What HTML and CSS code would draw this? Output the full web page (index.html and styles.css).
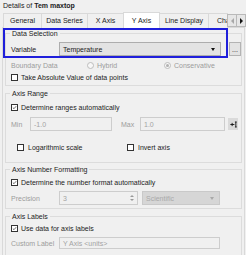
FILE: index.html
```html
<!DOCTYPE html>
<html>
<head>
<meta charset="utf-8">
<link rel="stylesheet" href="styles.css">
</head>
<body>
<div class="title">Details of <b>Tem maxtop</b></div>
<div class="tabs">
  <div class="tab w-general">General</div>
  <div class="tab w-series">Data Series</div>
  <div class="tab w-xaxis">X Axis</div>
  <div class="tab sel w-yaxis">Y Axis</div>
  <div class="tab w-line">Line Display</div>
  <div class="tab w-chart">Chart</div>
  <div class="scrollbtn left"><span class="tri-l"></span></div>
  <div class="scrollbtn right"><span class="tri-r"></span></div>
</div>
<div class="pane">
  <div class="group g1">
    <div class="gtitle">Data Selection</div>
    <div class="row r-var">
      <span class="lbl w48">Variable</span>
      <div class="combo w-var">Temperature<span class="arrow"></span></div>
      <div class="btn dots">...</div>
    </div>
    <div class="row r-bound dis">
      <span class="lbl w76">Boundary Data</span>
      <span class="opt w77"><span class="radio"></span>Hybrid</span>
      <span class="opt"><span class="radio on"></span>Conservative</span>
    </div>
    <div class="row r-chk">
      <span class="cb"></span><span class="cbt">Take Absolute Value of data points</span>
    </div>
  </div>

  <div class="group g2">
    <div class="gtitle">Axis Range</div>
    <div class="row r-chk m4">
      <span class="cb on"><svg viewBox="0 0 7 7"><polyline points="1.2,3.6 2.8,5.2 5.9,1.6" fill="none" stroke="#222" stroke-width="0.9"/></svg></span><span class="cbt">Determine ranges automatically</span>
    </div>
    <div class="row r-minmax dis">
      <span class="lbl w19">Min</span>
      <div class="field w-min">-1.0</div>
      <span class="lbl w19 ml9">Max</span>
      <div class="field w-max">1.0</div>
      <div class="iconbtn"><svg viewBox="0 0 10 10"><path d="M1.5 5h4.5M3.5 3.2v3.6M7.6 2.2v5.6M6.6 2.2h2M6.6 7.8h2" fill="none" stroke="#111" stroke-width="1"/></svg></div>
    </div>
    <div class="row r-log">
      <span class="opt w110"><span class="cb"></span><span class="cbt4">Logarithmic scale</span></span>
      <span class="opt"><span class="cb"></span><span class="cbt4">Invert axis</span></span>
    </div>
  </div>

  <div class="group g3">
    <div class="gtitle">Axis Number Formatting</div>
    <div class="row r-chk m3">
      <span class="cb on"><svg viewBox="0 0 7 7"><polyline points="1.2,3.6 2.8,5.2 5.9,1.6" fill="none" stroke="#222" stroke-width="0.9"/></svg></span><span class="cbt">Determine the number format automatically</span>
    </div>
    <div class="row r-prec dis">
      <span class="lbl w48">Precision</span>
      <div class="field w-spin">3<span class="spin"><span class="up"></span><span class="down"></span></span></div>
      <div class="combo discombo w-sci">Scientific<span class="arrow"></span></div>
    </div>
  </div>

  <div class="group g4">
    <div class="gtitle">Axis Labels</div>
    <div class="row r-chk m2">
      <span class="cb on"><svg viewBox="0 0 7 7"><polyline points="1.2,3.6 2.8,5.2 5.9,1.6" fill="none" stroke="#222" stroke-width="0.9"/></svg></span><span class="cbt">Use data for axis labels</span>
    </div>
    <div class="row r-custom dis">
      <span class="lbl w48">Custom Label</span>
      <div class="field w-custom">Y Axis &lt;units&gt;</div>
    </div>
  </div>
</div>
<div class="highlight"></div>
</body>
</html>
```

FILE: styles.css
```css
* { box-sizing: border-box; }
html, body { margin: 0; padding: 0; }
body {
  background: #f0f0f0;
  font-family: "Liberation Sans", Arial, sans-serif;
  font-size: 7px;
  color: #1c1c1c;
  width: 246px;
  height: 255px;
  overflow: hidden;
  position: relative;
}
.title { height: 12px; line-height: 12px; padding-left: 3px; white-space: nowrap; }
.title b { font-weight: bold; }

.tabs { display: flex; height: 16px; padding-left: 3px; align-items: flex-end; }
.tab {
  flex: none;
  height: 15px;
  line-height: 14px;
  text-align: center;
  border: 1px solid #d9d9d9;
  border-bottom: none;
  background: #f0f0f0;
  margin-right: -1px;
  white-space: nowrap;
  overflow: hidden;
}
.tab.sel { height: 16px; line-height: 15px; background: #fff; position: relative; z-index: 1; }
.w-general { width: 39px; }
.w-series { width: 47px; }
.w-xaxis { width: 37px; }
.w-yaxis { width: 37px; }
.w-line { width: 50px; }
.w-chart { width: 20px; text-align: left; padding-left: 8px; }
.scrollbtn {
  flex: none;
  width: 10px; height: 13px;
  margin-bottom: 1px;
  border: 1px solid #b9b9b9;
  background: #e6e6e6;
  display: flex; align-items: center; justify-content: center;
  position: relative; z-index: 2;
}
.scrollbtn.right { margin-left: -1px; }
.tri-l { width: 0; height: 0; border-top: 3px solid transparent; border-bottom: 3px solid transparent; border-right: 3px solid #a8a8a8; }
.tri-r { width: 0; height: 0; border-top: 3px solid transparent; border-bottom: 3px solid transparent; border-left: 3px solid #111; }

.pane {
  margin: -1px 1px 0 2px;
  border: 1px solid #d9d9d9;
  height: 240px;
  background: #f0f0f0;
}
.group {
  border: 1px solid #dcdcdc;
  margin: 0 2px 0 2px;
}
.g1 { margin-top: 5px; padding-bottom: 3px; }
.g2 { margin-top: 7px; padding-bottom: 10px; }
.g3 { margin-top: 6px; padding-bottom: 3px; }
.g4 { margin-top: 7px; padding-bottom: 6px; }
.gtitle {
  width: max-content;
  margin: -5px 0 0 4px;
  padding: 0 2px;
  line-height: 9px;
  background: #f0f0f0;
  white-space: nowrap;
}
.row { display: flex; align-items: center; padding-left: 5px; white-space: nowrap; }
.r-var { margin-top: 4px; height: 14px; }
.r-bound { margin-top: 2px; height: 14px; }
.r-chk { height: 10px; }
.m4 { margin-top: 4px; }
.m3 { margin-top: 3px; }
.m2 { margin-top: 2px; }
.r-minmax { margin-top: 5px; height: 14px; }
.r-log { margin-top: 11px; height: 10px; padding-left: 11px; }
.r-prec { margin-top: 4px; height: 14px; }
.r-custom { margin-top: 4px; height: 12px; }

.dis { color: #9c9c9c; }
.lbl { flex: none; }
.w48 { width: 48px; }
.w76 { width: 76px; }
.w19 { width: 19px; }
.ml9 { margin-left: 9px; }
.opt { display: flex; align-items: center; flex: none; }
.w77 { width: 77px; }
.w110 { width: 110px; }

.combo {
  position: relative;
  height: 100%;
  border: 1px solid #adadad;
  background: #e3e3e3;
  padding-left: 3px;
  display: flex; align-items: center;
  flex: none;
}
.combo .arrow {
  position: absolute; right: 5px; top: 50%; margin-top: -1px;
  width: 0; height: 0;
  border-left: 2.5px solid transparent; border-right: 2.5px solid transparent;
  border-top: 3px solid #111;
}
.w-var { width: 162px; }
.btn {
  flex: none;
  height: 100%;
  border: 1px solid #b3b3b3;
  background: #e3e3e3;
  display: flex; align-items: center; justify-content: center;
}
.dots { width: 12px; margin-left: 8px; letter-spacing: 0; line-height: 1; }

.radio {
  flex: none;
  width: 7px; height: 7px;
  border: 1px solid #bdbdbd;
  border-radius: 50%;
  background: #f7f7f7;
  margin-right: 3px;
  display: flex; align-items: center; justify-content: center;
}
.radio.on::after { content: ""; width: 3px; height: 3px; border-radius: 50%; background: #b0b0b0; }

.cb {
  flex: none;
  width: 7px; height: 7px;
  border: 1px solid #333;
  background: #fff;
  display: flex;
}
.cb svg { width: 5px; height: 5px; display: block; }
.cbt { margin-left: 3px; }
.cbt4 { margin-left: 4px; }

.field {
  position: relative;
  flex: none;
  height: 100%;
  border: 1px solid #cdcdcd;
  background: #f0f0f0;
  padding-left: 3px;
  display: flex; align-items: center;
  color: #a3a3a3;
}
.w-min { width: 82px; }
.w-max { width: 85px; }
.w-spin { width: 79px; }
.w-custom { width: 161px; }
.iconbtn {
  flex: none;
  width: 10px; height: 12px;
  margin-left: 3px;
  background: #dadada;
  display: flex; align-items: center; justify-content: center;
}
.iconbtn svg { width: 9px; height: 9px; display: block; }
.spin {
  position: absolute; right: 3px; top: 2px; bottom: 2px;
  display: flex; flex-direction: column; justify-content: space-between; align-items: center;
}
.spin .up { width: 0; height: 0; border-left: 2px solid transparent; border-right: 2px solid transparent; border-bottom: 2.5px solid #9a9a9a; margin-top: 1px; }
.spin .down { width: 0; height: 0; border-left: 2px solid transparent; border-right: 2px solid transparent; border-top: 2.5px solid #9a9a9a; margin-bottom: 1px; }
.discombo {
  margin-left: 4px;
  background: #d6d6d6;
  border-color: #c9c9c9;
  color: #a9a9a9;
}
.discombo .arrow { border-top-color: #a9a9a9; }
.w-sci { width: 78px; }

.highlight {
  position: absolute;
  left: 3px; top: 28px;
  width: 225px; height: 30px;
  border: 2px solid #1f1fdb;
  pointer-events: none;
}
```
